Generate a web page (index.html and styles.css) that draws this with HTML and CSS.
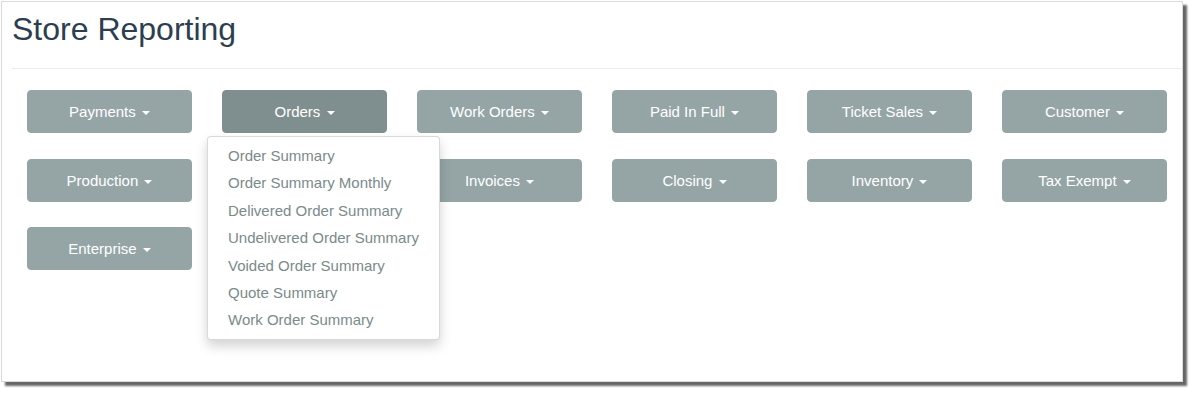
FILE: index.html
```html
<!DOCTYPE html>
<html lang="en">
<head>
<meta charset="UTF-8" />
<meta name="viewport" content="width=device-width, initial-scale=1.0"/>
<title>Store Reporting</title>
<link rel="stylesheet" href="styles.css">
</head>
<body>

<div class="frame">
    <div class="page-header">
        <h1>Store Reporting</h1>
    </div>

    <div class="report-grid">
        <div class="report-col"><button class="btn">Payments <span class="caret"></span></button></div>
        <div class="report-col">
            <button class="btn active">Orders <span class="caret"></span></button>
            <!-- open menu -->
            <ul class="dropdown-menu">
                <li><a href="#">Order Summary</a></li>
                <li><a href="#">Order Summary Monthly</a></li>
                <li><a href="#">Delivered Order Summary</a></li>
                <li><a href="#">Undelivered Order Summary</a></li>
                <li><a href="#">Voided Order Summary</a></li>
                <li><a href="#">Quote Summary</a></li>
                <li><a href="#">Work Order Summary</a></li>
            </ul>
        </div>
        <div class="report-col"><button class="btn">Work Orders <span class="caret"></span></button></div>
        <div class="report-col"><button class="btn">Paid In Full <span class="caret"></span></button></div>
        <div class="report-col"><button class="btn">Ticket Sales <span class="caret"></span></button></div>
        <div class="report-col"><button class="btn">Customer <span class="caret"></span></button></div>

        <div class="report-col"><button class="btn">Production <span class="caret"></span></button></div>
        <!-- hidden under the open menu -->
        <div class="report-col"><button class="btn"></button></div>
        <div class="report-col"><button class="btn">Invoices <span class="caret"></span></button></div>
        <div class="report-col"><button class="btn">Closing <span class="caret"></span></button></div>
        <div class="report-col"><button class="btn">Inventory <span class="caret"></span></button></div>
        <div class="report-col"><button class="btn">Tax Exempt <span class="caret"></span></button></div>

        <div class="report-col"><button class="btn">Enterprise <span class="caret"></span></button></div>
    </div>
</div>

</body>
</html>
```

FILE: styles.css
```css
body {
    font-family: "Liberation Sans", Arial, Helvetica, sans-serif;
    margin: 0;
    background: #fff;
    color: #2c3e50;
}

.frame {
    box-sizing: border-box;
    width: 1182px;
    height: 381px;
    margin: 1px 0 11px 1px;
    padding: 0 0 0 10px;
    background: #fff;
    border: 1px solid #dadada;
    box-shadow: 4px 4px 2px rgba(0,0,0,0.6);
}

.page-header {
    padding: 10px 0 21px;
    border-bottom: 1px solid #e8ecec;
}

.page-header h1 {
    margin: 0;
    font-size: 32px;
    font-weight: normal;
    line-height: 35px;
    color: #2c3e50;
}

.report-grid {
    display: grid;
    grid-template-columns: repeat(6, 195px);
    row-gap: 25.5px;
    padding-top: 21px;
}

.report-col {
    position: relative;
    padding: 0 15px;
}

.btn {
    display: block;
    width: 100%;
    height: 43px;
    padding: 10px 15px;
    border: 1px solid #95a5a6;
    border-radius: 4px;
    background: #95a5a6;
    color: #fff;
    font-family: inherit;
    font-size: 15px;
    line-height: 21px;
    cursor: pointer;
}

.btn.active {
    background: #7f8f90;
    border-color: #7f8f90;
}

.caret {
    display: inline-block;
    width: 0;
    height: 0;
    margin-left: 2px;
    vertical-align: middle;
    border-top: 4px solid;
    border-left: 4px solid transparent;
    border-right: 4px solid transparent;
}

/* Dropdown */
.dropdown-menu {
    position: absolute;
    top: 100%;
    left: 0;
    z-index: 10;
    margin: 3px 0 0;
    padding: 5px 0;
    list-style: none;
    background: #fff;
    border: 1px solid rgba(0,0,0,0.15);
    border-radius: 4px;
    box-shadow: 0 6px 12px rgba(0,0,0,0.175);
}

.dropdown-menu a {
    display: block;
    padding: 3px 20px;
    font-size: 15px;
    line-height: 21.4px;
    color: #7b8a8b;
    text-decoration: none;
    white-space: nowrap;
}

.dropdown-menu a:hover {
    background: #2c3e50;
    color: #fff;
}
```
